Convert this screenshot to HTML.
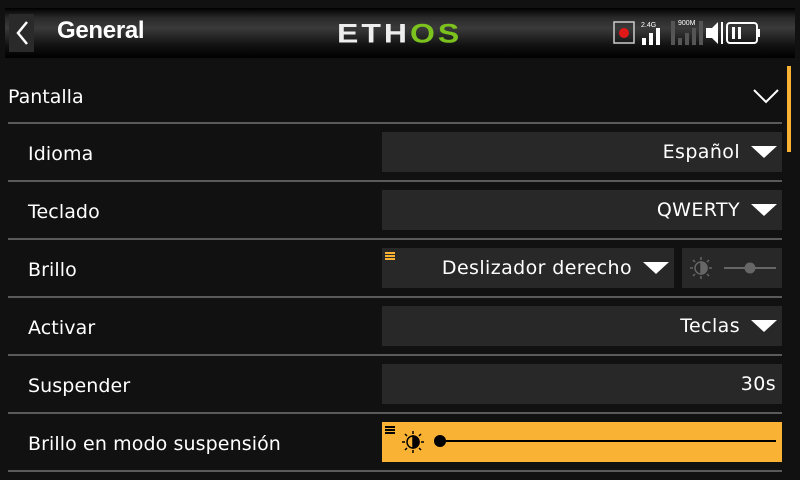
<!DOCTYPE html>
<html><head><meta charset="utf-8"><style>
*{margin:0;padding:0;box-sizing:border-box}
body{width:800px;height:480px;background:#111;position:relative;overflow:hidden;font-family:"DejaVu Sans","Liberation Sans",sans-serif;color:#fff}
.hdr{position:absolute;left:5px;top:8px;width:790px;height:50px;background:linear-gradient(#000 0%,#2a2a2a 20%,#3a3a3a 40%,#111 75%,#000 100%)}
.back{position:absolute;left:9px;top:14px;width:25px;height:38px;background:#2a2a2a}
.t{position:absolute;font-size:19px;white-space:nowrap}
.sep{position:absolute;left:8px;width:774px;height:2px;background:#5a5a5a}
.box{position:absolute;left:382px;width:400px;height:40px;background:#282828}
.val{position:absolute;right:42px;top:9px;font-size:19px;letter-spacing:0.4px}
.tri{position:absolute;right:5px;top:14px;width:0;height:0;border-left:13px solid transparent;border-right:13px solid transparent;border-top:12px solid #fff}
.lbl{position:absolute;left:28px;font-size:19px;letter-spacing:0.1px}
</style></head><body>
<div class="hdr"></div>
<div class="back"></div>
<svg style="position:absolute;left:9px;top:14px" width="25" height="38"><path d="M18 8 L9 19 L18 30" stroke="#fff" stroke-width="2.5" fill="none"/></svg>
<div class="t" style="left:57px;top:17px;font-weight:bold;font-size:24px;font-family:'Liberation Sans',sans-serif;letter-spacing:-0.3px">General</div>
<div class="t" style="left:337px;top:15px;font-size:32px;font-weight:bold;font-family:'Liberation Sans',sans-serif;letter-spacing:3px;transform:scaleY(0.85)"><span style="color:#eee">ETH</span><span style="color:#7cc21e">OS</span></div>
<svg style="position:absolute;left:612px;top:18px" width="170" height="30">
<rect x="2" y="4" width="20" height="21" fill="none" stroke="#ccc" stroke-width="1.5"/><circle cx="12" cy="15" r="5" fill="#e01818"/>
<text x="29" y="9" font-size="7" fill="#fff" font-family="Liberation Sans">2.4G</text>
<rect x="30" y="20" width="4" height="7" fill="#fff"/><rect x="37" y="15" width="4" height="12" fill="#fff"/><rect x="44" y="10" width="4" height="17" fill="#fff"/>
<text x="66" y="7" font-size="7" fill="#fff" font-family="Liberation Sans">900M</text>
<rect x="59" y="3" width="4" height="24" fill="#555"/><rect x="66" y="20" width="4" height="7" fill="#555"/><rect x="73" y="15" width="4" height="12" fill="#555"/><rect x="80" y="10" width="4" height="17" fill="#555"/><rect x="87" y="3" width="4" height="24" fill="#555"/>
<path d="M94 10 H100 L106 4 V26 L100 20 H94 Z" fill="#fff"/><rect x="109" y="4" width="2" height="22" fill="#fff"/>
<rect x="115" y="5" width="30" height="20" rx="3" fill="none" stroke="#fff" stroke-width="2"/><rect x="145" y="11" width="3" height="8" fill="#fff"/>
<rect x="120" y="9" width="3" height="12" fill="#fff"/><rect x="126" y="9" width="3" height="12" fill="#fff"/>
</svg>
<div class="t" style="left:8px;top:86px;font-size:19px">Pantalla</div>
<svg style="position:absolute;left:752px;top:86px" width="28" height="20"><path d="M2 4 L14 16 L26 4" stroke="#fff" stroke-width="2" fill="none"/></svg>
<div style="position:absolute;left:787px;top:66px;width:4px;height:86px;background:#f9b233"></div>
<div class="sep" style="top:122px"></div>

<div class="lbl" style="top:143px">Idioma</div>
<div class="box" style="top:132px"><div class="val">Español</div><div class="tri"></div></div>
<div class="sep" style="top:180px"></div>

<div class="lbl" style="top:201px">Teclado</div>
<div class="box" style="top:190px"><div class="val">QWERTY</div><div class="tri"></div></div>
<div class="sep" style="top:238px"></div>

<div class="lbl" style="top:259px">Brillo</div>
<div class="box" style="top:248px;width:292px"><div class="val">Deslizador derecho</div><div class="tri"></div>
<div style="position:absolute;left:3px;top:4px;width:10px;height:2px;background:#f9b233;box-shadow:0 3px 0 #f9b233,0 6px 0 #f9b233"></div></div>
<div class="box" style="top:248px;left:682px;width:100px">
<svg width="100" height="40"><g stroke="#666" stroke-width="1.5"><circle cx="19" cy="20" r="6" fill="none"/><path d="M19 14 A6 6 0 0 1 19 26 Z" fill="#666"/><path d="M19 9v3M19 28v3M8 20h3M27 20h3M11 12l2 2M25 26l2 2M11 28l2-2M25 14l2-2"/></g>
<line x1="42" y1="20" x2="94" y2="20" stroke="#666" stroke-width="2"/><circle cx="68" cy="20" r="5.5" fill="#666"/></svg></div>
<div class="sep" style="top:296px"></div>

<div class="lbl" style="top:317px">Activar</div>
<div class="box" style="top:306px"><div class="val">Teclas</div><div class="tri"></div></div>
<div class="sep" style="top:354px"></div>

<div class="lbl" style="top:375px">Suspender</div>
<div class="box" style="top:364px"><div class="val" style="right:6px">30s</div></div>
<div class="sep" style="top:412px"></div>

<div class="lbl" style="top:433px">Brillo en modo suspensión</div>
<div class="box" style="top:422px;background:#f9b233">
<div style="position:absolute;left:3px;top:4px;width:10px;height:2px;background:#000;box-shadow:0 3px 0 #000,0 6px 0 #000"></div>
<svg width="400" height="40"><g stroke="#000" stroke-width="1.5"><circle cx="31" cy="20" r="6" fill="none"/><path d="M31 14 A6 6 0 0 1 31 26 Z" fill="#000"/><path d="M31 9v3M31 28v3M20 20h3M39 20h3M23 12l2 2M37 26l2 2M23 28l2-2M37 14l2-2"/></g>
<line x1="58" y1="19" x2="394" y2="19" stroke="#000" stroke-width="2"/><circle cx="58" cy="19" r="6" fill="#000"/></svg></div>
<div class="sep" style="top:470px"></div>
</body></html>
